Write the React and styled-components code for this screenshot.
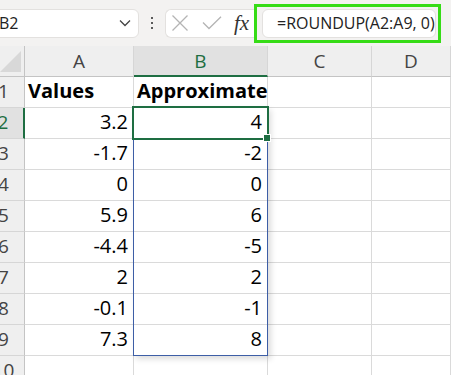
import React from 'react';
import styled, { createGlobalStyle } from 'styled-components';

const GlobalStyle = createGlobalStyle`
  html, body {
    margin: 0;
    padding: 0;
    background: #ffffff;
  }
  * {
    box-sizing: border-box;
  }
`;

const Screen = styled.div`
  width: 451px;
  height: 375px;
  overflow: hidden;
  background: #ffffff;
  font-family: 'Open Sans', 'Noto Sans', sans-serif;
`;

const Toolbar = styled.div`
  height: 46px;
  display: flex;
  align-items: center;
  background: #f3f2f1;
`;

const NameBox = styled.div`
  width: 147px;
  height: 29px;
  margin-left: -8px;
  display: flex;
  align-items: center;
  justify-content: space-between;
  padding: 0 7px 0 6px;
  background: #ffffff;
  border: 1px solid #e3e1df;
  border-radius: 6px;
  font-size: 16px;
  color: #222;
`;

const Grip = styled.div`
  width: 26px;
  display: flex;
  flex-direction: column;
  align-items: center;
  gap: 2.4px;

  span {
    width: 2.6px;
    height: 2.6px;
    background: #5a5a5a;
  }
`;

const EditBox = styled.div`
  width: 89px;
  height: 29px;
  display: flex;
  align-items: center;
  padding-left: 5px;
  gap: 13px;
  background: #ffffff;
  border: 1px solid #e3e1df;
  border-radius: 6px 0 0 6px;
  border-right: none;
`;

const Fx = styled.span`
  font-family: 'Liberation Serif', 'DejaVu Serif', serif;
  font-style: italic;
  font-size: 21px;
  color: #333;
  margin-left: -1px;
  line-height: 1;
`;

const FormulaFrame = styled.div`
  width: 187px;
  height: 39px;
  margin-top: 0;
  display: flex;
  align-items: center;
  padding: 0 3px 0 5px;
  border: 3px solid #36dc16;
`;

const FormulaBox = styled.div`
  flex: 1;
  height: 29px;
  display: flex;
  align-items: center;
  padding-left: 14px;
  background: #ffffff;
  border: 1px solid #e3e1df;
  border-radius: 6px;
  font-size: 16px;
  color: #222;
  white-space: nowrap;
`;

const Sheet = styled.div`
  display: grid;
  grid-template-columns: 42px 109px 134px 104px 1fr;
  grid-template-rows: 31px;
  grid-auto-rows: 31px;
  margin-left: -17px;
  width: calc(100% + 17px);
`;

const Corner = styled.div`
  position: relative;
  background: #efefef;
  border-right: 1px solid #c4c4c4;
  border-bottom: 1px solid #c4c4c4;

  &::after {
    content: '';
    position: absolute;
    right: 3px;
    bottom: 4px;
    width: 0;
    height: 0;
    border-left: 21px solid transparent;
    border-bottom: 21px solid #d8d8d8;
  }
`;

const ColHeader = styled.div`
  display: flex;
  align-items: center;
  justify-content: center;
  font-size: 19px;
  background: ${(p) => (p.$active ? '#e1e1e1' : '#efefef')};
  color: ${(p) => (p.$active ? '#1e6e42' : '#444')};
  border-right: 1px solid #d6d6d6;
  border-bottom: ${(p) => (p.$active ? '2px solid #1e6e42' : '1px solid #c4c4c4')};
`;

const RowHeader = styled.div`
  display: flex;
  justify-content: center;
  font-size: 19px;
  line-height: 28px;
  background: ${(p) => (p.$active ? '#e1e1e1' : '#efefef')};
  color: ${(p) => (p.$active ? '#1e6e42' : '#444')};
  border-right: ${(p) => (p.$active ? '2px solid #1e6e42' : '1px solid #c4c4c4')};
  border-bottom: 1px solid #d6d6d6;
`;

const Cell = styled.div`
  position: relative;
  display: flex;
  justify-content: ${(p) => (p.$right ? 'flex-end' : 'flex-start')};
  padding: 0 5px 0 3px;
  font-size: 20px;
  line-height: 28px;
  font-weight: ${(p) => (p.$bold ? 700 : 400)};
  color: #000;
  white-space: nowrap;
  border-right: 1px solid #dadada;
  border-bottom: 1px solid #dadada;
`;

const SpillRange = styled.div`
  position: absolute;
  left: -1px;
  top: -1px;
  width: 135px;
  height: 249px;
  border: 1px solid #3d5ea6;
  box-shadow: 3px 3px 6px rgba(0, 0, 0, 0.14);
  pointer-events: none;
  z-index: 1;
`;

const Selection = styled.div`
  position: absolute;
  left: -2px;
  top: -2px;
  width: 137px;
  height: 34px;
  border: 2px solid #1e6e42;
  z-index: 2;

  &::after {
    content: '';
    position: absolute;
    right: -4px;
    bottom: -4px;
    width: 6px;
    height: 6px;
    background: #1e6e42;
    border: 1px solid #fff;
  }
`;

const CellValue = styled.span`
  position: relative;
  z-index: 3;
`;

const values = ['3.2', '-1.7', '0', '5.9', '-4.4', '2', '-0.1', '7.3'];
const approx = ['4', '-2', '0', '6', '-5', '2', '-1', '8'];

const App = () => {
  return (
    <Screen>
      <GlobalStyle />
      <Toolbar>
        <NameBox>
          <span>B2</span>
          <svg width="12" height="8" viewBox="0 0 12 8">
            <polyline points="1,1.5 6,6.5 11,1.5" fill="none" stroke="#444" strokeWidth="1.3" />
          </svg>
        </NameBox>
        <Grip>
          <span />
          <span />
          <span />
        </Grip>
        <EditBox>
          <svg width="18" height="16" viewBox="0 0 18 16">
            <path d="M1.5 0.5 L16.5 15.5 M16.5 0.5 L1.5 15.5" stroke="#b4b4b4" strokeWidth="1.3" fill="none" />
          </svg>
          <svg width="20" height="14" viewBox="0 0 20 14">
            <polyline points="1,6.5 7,12.5 19,0.8" stroke="#b4b4b4" strokeWidth="1.3" fill="none" />
          </svg>
          <Fx>fx</Fx>
        </EditBox>
        <FormulaFrame>
          <FormulaBox>=ROUNDUP(A2:A9, 0)</FormulaBox>
        </FormulaFrame>
      </Toolbar>

      <Sheet>
        <Corner />
        <ColHeader>A</ColHeader>
        <ColHeader $active>B</ColHeader>
        <ColHeader>C</ColHeader>
        <ColHeader>D</ColHeader>

        <RowHeader>1</RowHeader>
        <Cell $bold>Values</Cell>
        <Cell $bold>Approximate</Cell>
        <Cell />
        <Cell />

        {values.map((v, i) => (
          <React.Fragment key={i}>
            <RowHeader $active={i === 0}>{i + 2}</RowHeader>
            <Cell $right>{v}</Cell>
            <Cell $right>
              {i === 0 && <SpillRange />}
              {i === 0 && <Selection />}
              <CellValue>{approx[i]}</CellValue>
            </Cell>
            <Cell />
            <Cell />
          </React.Fragment>
        ))}

        <RowHeader>10</RowHeader>
        <Cell />
        <Cell />
        <Cell />
        <Cell />
      </Sheet>
    </Screen>
  );
};

export default App;
